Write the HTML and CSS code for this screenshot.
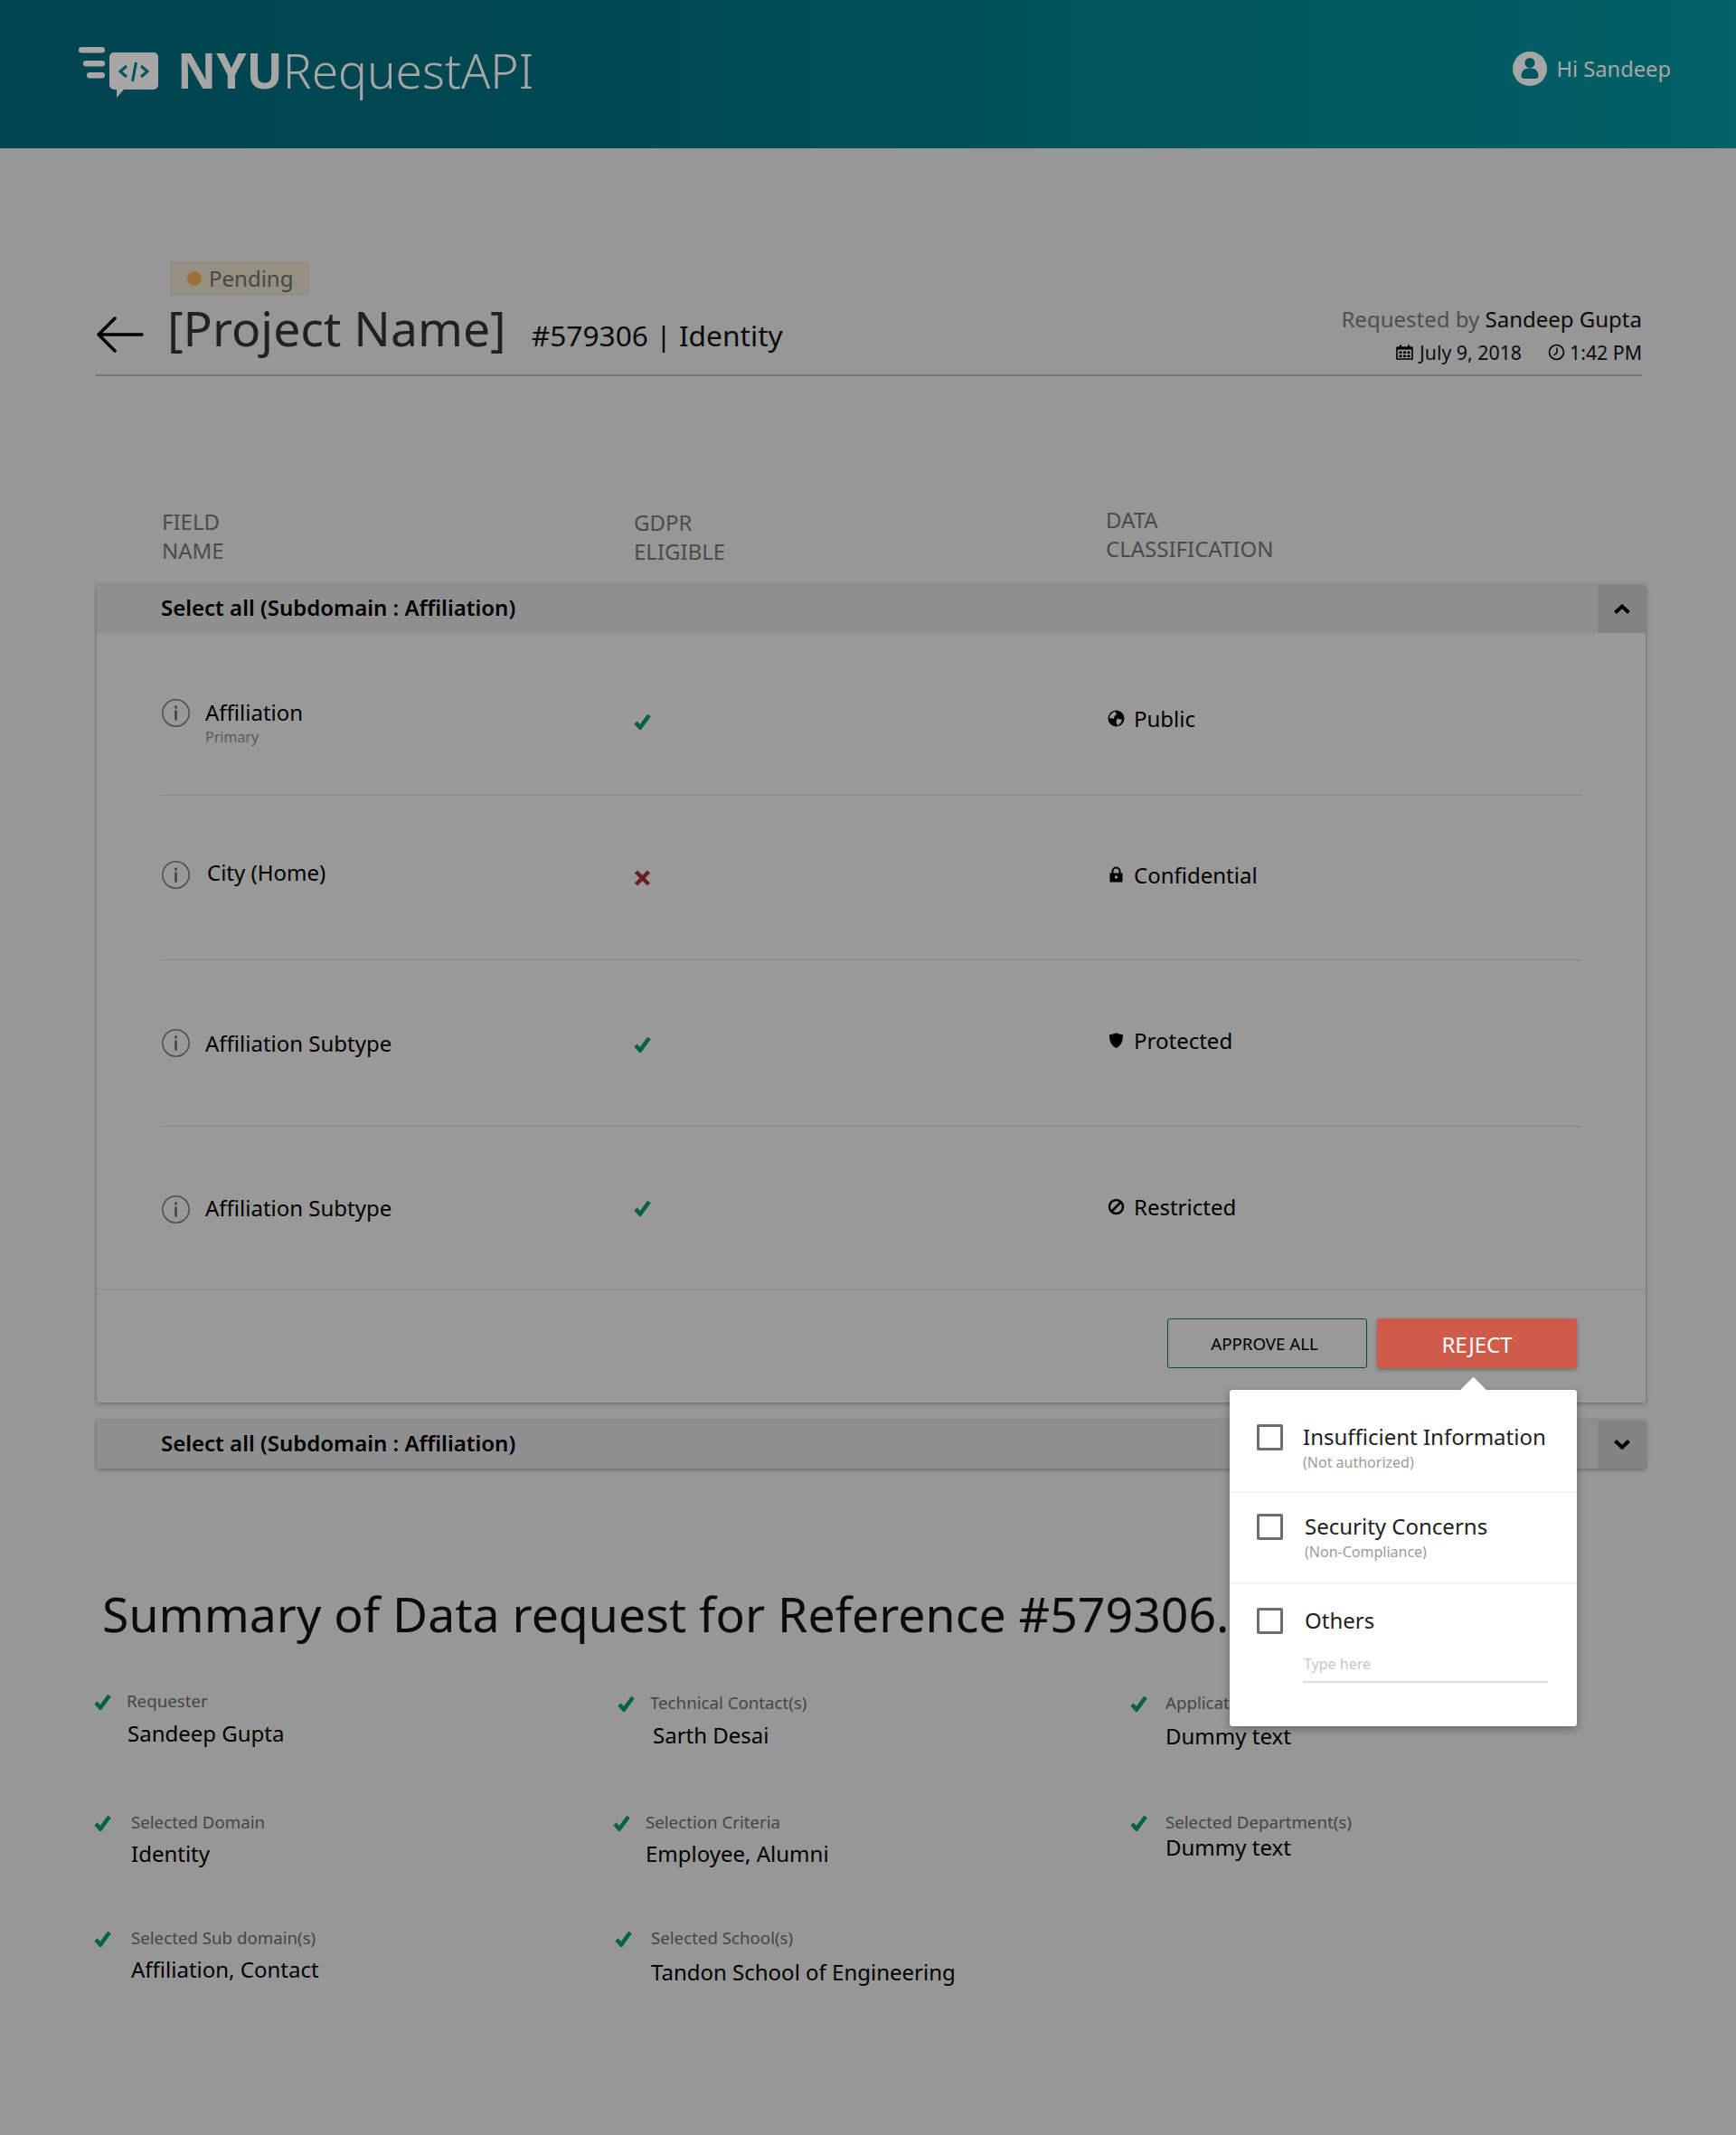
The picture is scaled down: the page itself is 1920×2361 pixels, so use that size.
FILE: index.html
```html
<!DOCTYPE html>
<html lang="en">
<head>
<meta charset="utf-8">
<title>NYU RequestAPI</title>
<link rel="stylesheet" href="styles.css">
</head>
<body>
<header class="topbar">
  <div class="brand">
    <svg class="logo" width="90" height="58" viewBox="0 0 90 58">
      <rect x="0" y="0" width="29" height="6.5" rx="3" fill="#fff"/>
      <rect x="5" y="15" width="24" height="6.5" rx="3" fill="#fff"/>
      <rect x="9" y="28" width="20" height="6.5" rx="3" fill="#fff"/>
      <path d="M39 6h44a5 5 0 0 1 5 5v31a5 5 0 0 1-5 5H50l-8 9v-9h-3a5 5 0 0 1-5-5V11a5 5 0 0 1 5-5z" fill="#fff"/>
      <path d="M53 21l-7 6 7 6M69 21l7 6-7 6M63.500 17l-4 21" fill="none" stroke="#00818f" stroke-width="3"/>
    </svg>
    <div class="brand-name"><b>NYU</b>RequestAPI</div>
  </div>
  <div class="user">
    <svg width="38" height="38" viewBox="0 0 38 38">
      <circle cx="19" cy="19" r="19" fill="#fff"/>
      <circle cx="19" cy="12.500" r="5.500" fill="#00818f"/>
      <path d="M9.500 27c0-6 4-8.500 9.500-8.500s9.500 2.500 9.500 8.500c0 2-1.500 3-3.500 3H13c-2 0-3.500-1-3.500-3z" fill="#00818f"/>
    </svg>
    <span>Hi Sandeep</span>
  </div>
</header>

<main class="page">
  <section class="request-head">
    <div class="request-main">
      <div class="badge"><i class="badge-dot"></i>Pending</div>
      <div class="title-row">
        <svg class="back" width="52" height="40" viewBox="0 0 52 40">
          <path d="M20 2L2 20l18 18M2 20h48" fill="none" stroke="#000" stroke-width="3.500" stroke-linecap="round" stroke-linejoin="round"/>
        </svg>
        <h1>[Project Name]</h1>
        <div class="ref">#579306 | Identity</div>
      </div>
    </div>
    <div class="request-meta">
      <div class="requested"><span>Requested by</span> Sandeep Gupta</div>
      <div class="when">
        <svg width="19" height="17" viewBox="0 0 19 17">
          <path d="M1 3.500h17v12.500H1z" fill="none" stroke="#000" stroke-width="1.600"/>
          <path d="M1 2.500h17v3H1zM4 .5h2v3H4zM13 .5h2v3h-2z"/>
          <path d="M3.500 7.500h3v2.500h-3zM8 7.500h3v2.500H8zM12.500 7.500h3v2.500h-3zM3.500 11.500h3V14h-3zM8 11.500h3V14H8zM12.500 11.500h3V14h-3z"/>
        </svg>
        <span class="date">July 9, 2018</span>
        <svg class="clock" width="19" height="19" viewBox="0 0 19 19">
          <circle cx="9.500" cy="9.500" r="8" fill="none" stroke="#000" stroke-width="1.600"/>
          <path d="M10 4.500v5.500l-3.500 3" fill="none" stroke="#000" stroke-width="1.500"/>
        </svg>
        <span>1:42 PM</span>
      </div>
    </div>
  </section>

  <div class="columns">
    <div>FIELD<br>NAME</div>
    <div class="col-gdpr">GDPR<br>ELIGIBLE</div>
    <div class="col-class">DATA<br>CLASSIFICATION</div>
  </div>

  <section class="card">
    <div class="accordion-head">
      <div class="accordion-title">Select all (Subdomain : Affiliation)</div>
      <div class="toggle">
        <svg width="18" height="11" viewBox="0 0 18 11"><path d="M1.500 9.500L9 2.500l7.500 7" fill="none" stroke="#000" stroke-width="4"/></svg>
      </div>
    </div>

    <div class="row row-1">
      <div class="field field-first">
        <svg class="info" width="31" height="31" viewBox="0 0 31 31"><circle cx="15.500" cy="15.500" r="14.700" fill="none" stroke="#777" stroke-width="1.500"/><path d="M14 7.500h3v3h-3zM14 12.500h3v11h-3z" fill="#777"/></svg>
        <div class="field-text"><div class="field-name">Affiliation</div><div class="field-sub">Primary</div></div>
      </div>
      <div class="gdpr gdpr-first">
        <svg width="19" height="18" viewBox="0 0 19 18"><path class="tick" d="M2 10l5 5.500L17 2"/></svg>
      </div>
      <div class="klass klass-first">
        <svg class="klass-icon" width="19" height="19" viewBox="0 0 19 19"><circle cx="9.500" cy="9.500" r="9"/><path d="M2 9.500C2 6 5 2.500 8.500 2L10 5 7.500 7 7 10 4.500 9zM10.500 9.500l5.500 1.500-1.500 3.500-3.500 3-1.500-4z" fill="#f0f0f0"/></svg>
        <span>Public</span>
      </div>
    </div>

    <div class="row row-2">
      <div class="field field-city">
        <svg class="info" width="31" height="31" viewBox="0 0 31 31"><circle cx="15.500" cy="15.500" r="14.700" fill="none" stroke="#777" stroke-width="1.500"/><path d="M14 7.500h3v3h-3zM14 12.500h3v11h-3z" fill="#777"/></svg>
        <div class="field-name city-name">City (Home)</div>
      </div>
      <div class="gdpr">
        <svg width="19" height="18" viewBox="0 0 19 18"><path d="M2.500 2l14 14M16.500 2l-14 14" fill="none" stroke="#a82f3a" stroke-width="4.500"/></svg>
      </div>
      <div class="klass klass-up">
        <svg class="klass-icon" width="19" height="19" viewBox="0 0 19 19"><path d="M2.500 7.500h14v10h-14z"/><path d="M5.500 8V5.500a4 4 0 0 1 8 0V8" fill="none" stroke="#000" stroke-width="2"/><circle cx="9.500" cy="12" r="1.700" fill="#f0f0f0"/></svg>
        <span>Confidential</span>
      </div>
    </div>

    <div class="row row-3">
      <div class="field">
        <svg class="info" width="31" height="31" viewBox="0 0 31 31"><circle cx="15.500" cy="15.500" r="14.700" fill="none" stroke="#777" stroke-width="1.500"/><path d="M14 7.500h3v3h-3zM14 12.500h3v11h-3z" fill="#777"/></svg>
        <div class="field-name">Affiliation Subtype</div>
      </div>
      <div class="gdpr gdpr-down">
        <svg width="19" height="18" viewBox="0 0 19 18"><path class="tick" d="M2 10l5 5.500L17 2"/></svg>
      </div>
      <div class="klass klass-up">
        <svg class="klass-icon" width="19" height="19" viewBox="0 0 19 19"><path d="M9.500 1c2.500 1.500 5 2 7.500 2 0 7-1.500 12-7.500 15C3.500 15 2 10 2 3c2.500 0 5-.5 7.500-2z"/></svg>
        <span>Protected</span>
      </div>
    </div>

    <div class="row row-last">
      <div class="field">
        <svg class="info info-down" width="31" height="31" viewBox="0 0 31 31"><circle cx="15.500" cy="15.500" r="14.700" fill="none" stroke="#777" stroke-width="1.500"/><path d="M14 7.500h3v3h-3zM14 12.500h3v11h-3z" fill="#777"/></svg>
        <div class="field-name">Affiliation Subtype</div>
      </div>
      <div class="gdpr">
        <svg width="19" height="18" viewBox="0 0 19 18"><path class="tick" d="M2 10l5 5.500L17 2"/></svg>
      </div>
      <div class="klass klass-last">
        <svg class="klass-icon" width="19" height="19" viewBox="0 0 19 19"><circle cx="9.500" cy="9.500" r="7.500" fill="none" stroke="#000" stroke-width="2.500"/><path d="M4.500 14.500l10-10" stroke="#000" stroke-width="2.500"/></svg>
        <span>Restricted</span>
      </div>
    </div>

    <div class="card-foot">
      <button class="btn btn-outline" type="button">APPROVE ALL</button>
      <div class="reject-wrap">
        <button class="btn btn-reject" type="button">REJECT</button>
        <div class="popover">
          <div class="option opt-one">
            <i class="box"></i>
            <div><div class="opt-name">Insufficient Information</div><div class="opt-sub">(Not authorized)</div></div>
          </div>
          <div class="option opt-two">
            <i class="box"></i>
            <div class="opt-text"><div class="opt-name">Security Concerns</div><div class="opt-sub">(Non-Compliance)</div></div>
          </div>
          <div class="option opt-three">
            <i class="box"></i>
            <div class="opt-text opt-fill">
              <div class="opt-name">Others</div>
              <div class="opt-input">Type here</div>
            </div>
          </div>
        </div>
      </div>
    </div>
  </section>

  <section class="card card-closed">
    <div class="accordion-head">
      <div class="accordion-title">Select all (Subdomain : Affiliation)</div>
      <div class="toggle">
        <svg width="18" height="11" viewBox="0 0 18 11"><path d="M1.500 1.500L9 8.500l7.500-7" fill="none" stroke="#000" stroke-width="4"/></svg>
      </div>
    </div>
  </section>

  <h2 class="summary-title">Summary of Data request for Reference #579306.</h2>

  <section class="summary">
    <div class="item item-1"><svg width="19" height="18" viewBox="0 0 19 18"><path class="tick" d="M2 10l5 5.500L17 2"/></svg><div class="item-body"><div class="item-label">Requester</div><div class="item-value">Sandeep Gupta</div></div></div>
    <div class="item item-2"><svg width="19" height="18" viewBox="0 0 19 18"><path class="tick" d="M2 10l5 5.500L17 2"/></svg><div class="item-body"><div class="item-label">Technical Contact(s)</div><div class="item-value">Sarth Desai</div></div></div>
    <div class="item item-3"><svg width="19" height="18" viewBox="0 0 19 18"><path class="tick" d="M2 10l5 5.500L17 2"/></svg><div class="item-body"><div class="item-label">Application Name</div><div class="item-value">Dummy text</div></div></div>
    <div class="item item-4"><svg width="19" height="18" viewBox="0 0 19 18"><path class="tick" d="M2 10l5 5.500L17 2"/></svg><div class="item-body"><div class="item-label">Selected Domain</div><div class="item-value">Identity</div></div></div>
    <div class="item item-5"><svg width="19" height="18" viewBox="0 0 19 18"><path class="tick" d="M2 10l5 5.500L17 2"/></svg><div class="item-body"><div class="item-label">Selection Criteria</div><div class="item-value">Employee, Alumni</div></div></div>
    <div class="item item-6"><svg width="19" height="18" viewBox="0 0 19 18"><path class="tick" d="M2 10l5 5.500L17 2"/></svg><div class="item-body"><div class="item-label">Selected Department(s)</div><div class="item-value">Dummy text</div></div></div>
    <div class="item item-7"><svg width="19" height="18" viewBox="0 0 19 18"><path class="tick" d="M2 10l5 5.500L17 2"/></svg><div class="item-body"><div class="item-label">Selected Sub domain(s)</div><div class="item-value">Affiliation, Contact</div></div></div>
    <div class="item item-8"><svg width="19" height="18" viewBox="0 0 19 18"><path class="tick" d="M2 10l5 5.500L17 2"/></svg><div class="item-body"><div class="item-label">Selected School(s)</div><div class="item-value">Tandon School of Engineering</div></div></div>
  </section>
</main>

<div class="backdrop"></div>
</body>
</html>
```

FILE: styles.css
```css
* { box-sizing: border-box; }
html, body { margin: 0; padding: 0; }
body {
  position: relative;
  height: 2361px;
  overflow: hidden;
  background: #e8e8e8;
  font-family: "Noto Sans", "Open Sans", sans-serif;
  color: #000;
}
.backdrop {
  position: absolute;
  inset: 0;
  z-index: 10;
  background: rgba(0, 0, 0, .35);
}

/* top bar */
.topbar {
  height: 164px;
  display: flex;
  justify-content: space-between;
  padding: 52px 72px 0 87px;
  background: linear-gradient(90deg, #006a7c 0%, #00707f 35%, #008690 70%, #00959d 100%);
  color: #fff;
}
.brand { display: flex; align-items: flex-start; }
.logo { flex: none; }
.brand-name {
  margin: -10px 0 0 19px;
  font-size: 53.200px;
  line-height: 72px;
  font-weight: 300;
}
.brand-name b { font-weight: 700; }
.user {
  display: flex;
  align-items: center;
  gap: 10px;
  height: 48px;
  font-size: 23.700px;
  line-height: 48px;
}

/* page head */
.page { padding: 0 0 0 106px; }
.request-head {
  width: 1710px;
  height: 252px;
  padding-top: 125px;
  display: flex;
  justify-content: space-between;
  border-bottom: 2px solid #b8b8b8;
}
.badge {
  display: flex;
  align-items: center;
  width: 154px;
  height: 38px;
  margin-left: 82px;
  padding-left: 19px;
  background: #e6dcca;
  color: #6e6e6e;
  font-size: 24px;
  line-height: 38px;
}
.badge-dot {
  width: 16px;
  height: 16px;
  margin-right: 8px;
  border-radius: 50%;
  background: #f0b050;
}
.title-row { display: flex; align-items: flex-start; }
.back { margin: 23px 0 0 1px; flex: none; }
.title-row h1 {
  margin: 0 0 0 26px;
  font-size: 53.500px;
  line-height: 72px;
  font-weight: 400;
  color: #333;
}
.ref {
  margin: 21px 0 0 28px;
  font-size: 31.700px;
  line-height: 46px;
  color: #111;
}
.request-meta { text-align: right; padding-top: 46px; }
.requested { font-size: 24px; line-height: 36px; color: #111; }
.requested span { color: #7a7a7a; }
.when {
  display: flex;
  justify-content: flex-end;
  align-items: center;
  height: 36px;
  font-size: 21.300px;
  color: #111;
}
.date { margin-left: 7px; }
.clock { margin: 0 5px 0 29px; }

/* column heads */
.columns {
  display: grid;
  grid-template-columns: 522px 522px auto;
  margin: 145px 0 0 73px;
  height: 86px;
  font-size: 24px;
  line-height: 32px;
  color: #747474;
}
.col-gdpr { padding-top: 1px; }
.col-class { margin-top: -2px; }

/* accordion card */
.card {
  width: 1713px;
  margin-left: 1px;
  background: #ebebeb;
  box-shadow: 0 1px 5px rgba(0, 0, 0, .35);
}
.card-closed { margin-top: 20px; }
.accordion-head {
  display: flex;
  justify-content: space-between;
  height: 53px;
  background: #dcdcdc;
}
.accordion-title {
  padding-left: 71px;
  font-size: 24px;
  font-weight: 600;
  line-height: 50px;
}
.toggle {
  width: 53px;
  display: flex;
  align-items: center;
  justify-content: center;
  background: #c9c9c9;
}
.row {
  display: grid;
  grid-template-columns: 522px 522px auto;
  align-items: center;
  margin: 0 70px;
  padding-left: 2px;
  border-bottom: 1px solid #d0d0d0;
}
.row-1 { height: 180px; }
.row-2 { height: 182px; }
.row-3 { height: 184px; }
.row-last { height: 180px; margin: 0; padding-left: 72px; }
.field { display: flex; align-items: center; gap: 17px; }
.field-first { align-items: flex-start; padding-top: 20px; }
.field-text { margin-top: -2px; }
.info { flex: none; }
.info-down { margin-top: 4px; }
.field-name { font-size: 24px; line-height: 34px; }
.field-sub { font-size: 16px; line-height: 22px; margin-top: -1px; color: #8c8c8c; }
.field-city { margin-bottom: 7px; }
.city-name { margin-bottom: 4px; padding-left: 2px; }
.gdpr { display: flex; }
.gdpr-first { margin-top: 16px; }
.gdpr-down { margin-top: 3px; }
.tick { fill: none; stroke: #00966e; stroke-width: 4.500; }
.klass { display: flex; align-items: center; gap: 10px; font-size: 24px; line-height: 34px; }
.klass-icon { flex: none; margin-left: 2px; }
.klass-first { margin-top: 10px; }
.klass-up { margin-bottom: 6px; }
.klass-last { margin-bottom: 2px; }

/* footer actions */
.card-foot {
  display: flex;
  justify-content: flex-end;
  gap: 11px;
  height: 125px;
  padding: 32px 76px 0 0;
}
.btn {
  display: block;
  width: 221px;
  height: 55px;
  padding: 0;
  border-radius: 3px;
  font-family: inherit;
}
.btn-outline {
  padding-right: 6px;
  background: transparent;
  border: 1.500px solid #00717d;
  color: #000;
  font-size: 18.700px;
}
.reject-wrap { position: relative; z-index: 20; }
.btn-reject {
  padding-top: 2px;
  border: 0;
  background: #cf5c4b;
  color: #fff;
  font-size: 24px;
  box-shadow: 0 2px 4px rgba(0, 0, 0, .3);
}

/* reject popover */
.popover {
  position: absolute;
  top: 79px;
  right: 0;
  width: 384px;
  height: 372px;
  background: #fff;
  border-radius: 3px;
  box-shadow: 0 3px 10px rgba(0, 0, 0, .3);
}
.popover::before {
  content: "";
  position: absolute;
  top: -10px;
  right: 104px;
  width: 21px;
  height: 21px;
  background: #fff;
  transform: rotate(45deg);
}
.option {
  position: relative;
  display: flex;
  align-items: flex-start;
  gap: 22px;
  padding-left: 30px;
  border-bottom: 2px solid #f4f4f4;
}
.opt-one { height: 114px; padding-top: 38px; }
.opt-two { height: 101px; padding-top: 23px; }
.opt-three { height: 157px; padding-top: 26px; border-bottom: 0; }
.box {
  flex: none;
  width: 29px;
  height: 29px;
  border: 3px solid #6e6e6e;
  border-radius: 2px;
}
.opt-name { margin-top: -3px; font-size: 24px; line-height: 34px; color: #222; }
.opt-sub { font-size: 16px; line-height: 20px; margin-top: 1px; color: #9b9b9b; }
.opt-text { margin-left: 2px; }
.opt-fill { width: 269px; }
.opt-input {
  margin: 15px 0 0 -2px;
  height: 37px;
  padding-left: 1px;
  border-bottom: 2px solid #dedede;
  font-size: 16px;
  line-height: 32px;
  color: #c8c8c8;
}

/* summary */
.summary-title {
  margin: 123px 0 0 7px;
  font-size: 53.600px;
  line-height: 76px;
  font-weight: 400;
  color: #111;
}
.summary {
  display: grid;
  grid-template-columns: 573px 573px auto;
  grid-template-rows: 134px 128px auto;
  margin: 46px 0 0 -2px;
}
.item { display: flex; align-items: flex-start; }
.item svg { flex: none; margin-top: 4px; }
.item-body { margin-left: 17px; }
.item-label { font-size: 18.700px; line-height: 24px; color: #6a6a6a; }
.item-value { margin-top: 6px; font-size: 24px; line-height: 34px; color: #000; }
.item-1 .item-value { margin: 7px 0 0 1px; }
.item-2 { padding: 2px 0 0 6px; }
.item-2 .item-value { margin: 7px 0 0 3px; }
.item-3 { padding-top: 2px; }
.item-3 .item-body { margin-left: 20px; }
.item-3 .item-value { margin-top: 8px; }
.item-4 .item-body, .item-7 .item-body { margin-left: 22px; }
.item-5 { padding-left: 1px; }
.item-6 .item-body { margin-left: 20px; }
.item-6 .item-value { margin-top: 1px; line-height: 30px; }
.item-8 { padding-left: 3px; }
.item-8 .item-body { margin-left: 21px; }
.item-8 .item-value { margin-top: 9px; }
```
